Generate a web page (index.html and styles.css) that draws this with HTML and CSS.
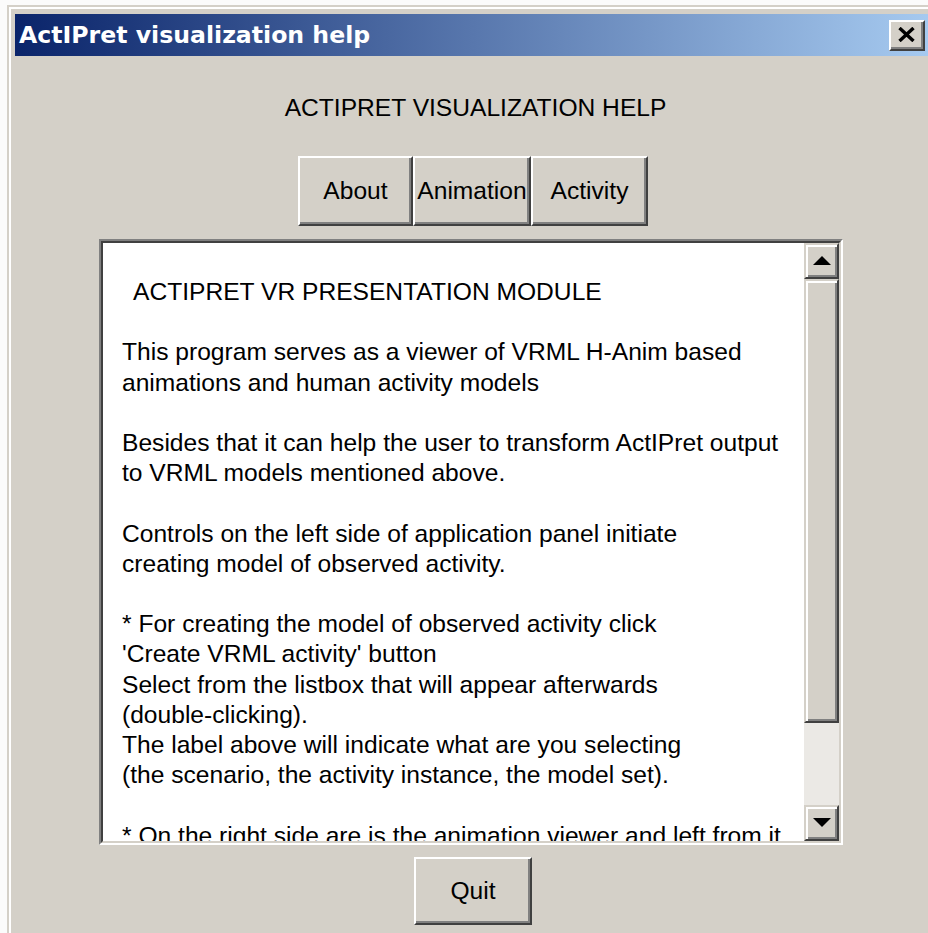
FILE: index.html
```html
<!DOCTYPE html>
<html lang="en">
<head>
<meta charset="utf-8">
<title>ActIPret visualization help</title>
<link rel="stylesheet" href="styles.css">
</head>
<body>
<div class="window">
  <div class="frame">
    <div class="titlebar">
      <span class="title">ActIPret visualization help</span>
      <button class="close" type="button" aria-label="Close">
        <svg width="17" height="15" viewBox="0 0 17 15" aria-hidden="true">
          <path d="M1.5 1 L15.5 14 M15.5 1 L1.5 14" stroke="#000" stroke-width="3.4" fill="none"/>
        </svg>
      </button>
    </div>
    <div class="client">
      <h1 class="heading">ACTIPRET VISUALIZATION HELP</h1>
      <div class="tabs">
        <button class="btn tab tab-about" type="button">About</button>
        <button class="btn tab tab-animation" type="button">Animation</button>
        <button class="btn tab tab-activity" type="button">Activity</button>
      </div>
      <div class="textbox">
        <div class="textbox-inner">
          <div class="text">
            <p class="text-title">ACTIPRET VR PRESENTATION MODULE</p>
            <p>This program serves as a viewer of VRML H-Anim based<br>animations and human activity models</p>
            <p>Besides that it can help the user to transform ActIPret output<br>to VRML models mentioned above.</p>
            <p>Controls on the left side of application panel initiate<br>creating model of observed activity.</p>
            <p>* For creating the model of observed activity click<br>'Create VRML activity' button<br>Select from the listbox that will appear afterwards<br>(double-clicking).<br>The label above will indicate what are you selecting<br>(the scenario, the activity instance, the model set).</p>
            <p>* On the right side are is the animation viewer and left from it</p>
          </div>
          <div class="scrollbar">
            <div class="sb-btn sb-up">
              <svg width="18" height="9" viewBox="0 0 18 9" aria-hidden="true"><polygon points="0,9 9,0 18,9" fill="#000"/></svg>
            </div>
            <div class="sb-thumb"></div>
            <div class="sb-track"></div>
            <div class="sb-btn sb-down">
              <svg width="18" height="9" viewBox="0 0 18 9" aria-hidden="true"><polygon points="0,0 18,0 9,9" fill="#000"/></svg>
            </div>
          </div>
        </div>
      </div>
      <button class="btn quit" type="button">Quit</button>
    </div>
  </div>
</div>
</body>
</html>
```

FILE: styles.css
```css
html, body {
  margin: 0;
  height: 100%;
  overflow: hidden;
  background: #fbfbfb;
}

body {
  font-family: "Liberation Sans", Arial, sans-serif;
  color: #000;
}

/* window frame: outer face line, white highlight, then face padding */
.window {
  margin: 5px 0 0 7px;
  width: 940px;
  border-top: 2px solid #d4d0c8;
  border-left: 2px solid #d4d0c8;
}

.frame {
  border-top: 2px solid #fff;
  border-left: 2px solid #fff;
  padding: 5px 0 0 4px;
  background: #d4d0c8;
  height: 940px;
}

.titlebar {
  width: 916px;
  height: 42px;
  box-sizing: border-box;
  padding: 0 6px 0 4px;
  display: flex;
  align-items: center;
  justify-content: space-between;
  background: linear-gradient(to right, #0a246a, #a6caf0);
}

.title {
  font-family: "DejaVu Sans", Verdana, sans-serif;
  font-weight: bold;
  font-size: 23.6px;
  color: #fff;
}

.close {
  width: 36px;
  height: 31px;
  padding: 0 2px 1px 0;
  margin: 0;
  display: flex;
  align-items: center;
  justify-content: center;
  background: #d4d0c8;
  border: 2px solid;
  border-color: #fff #404040 #404040 #fff;
  box-shadow: inset -2px -2px 0 #808080;
  box-sizing: border-box;
}

.client {
  width: 916px;
  display: flex;
  flex-direction: column;
  align-items: center;
}

.heading {
  margin: 37px 0 0 5px;
  font-weight: normal;
  font-size: 24.6px;
  line-height: 30px;
}

.tabs {
  display: flex;
  margin-top: 33px;
}

.btn {
  font-family: "Liberation Sans", Arial, sans-serif;
  font-size: 24.6px;
  color: #000;
  background: #d4d0c8;
  border: 2px solid;
  border-color: #fff #404040 #404040 #fff;
  box-shadow: inset -2px -2px 0 #808080;
  box-sizing: border-box;
  padding: 0;
  margin: 0;
}

.tab {
  height: 70px;
}

.tab-about { width: 115px; }
.tab-animation { width: 118px; }
.tab-activity { width: 117px; }

/* sunken edit box */
.textbox {
  margin: 13px 4px 0 0;
  width: 744px;
  height: 606px;
  box-sizing: border-box;
  border: 2px solid;
  border-color: #808080 #fff #fff #808080;
}

.textbox-inner {
  height: 100%;
  box-sizing: border-box;
  border: 2px solid;
  border-color: #404040 #d4d0c8 #d4d0c8 #404040;
  background: #fff;
  display: flex;
}

.text {
  flex: 1;
  overflow: hidden;
  padding: 34px 0 0 19px;
  font-size: 24.6px;
  line-height: 30.2px;
  white-space: nowrap;
}

.text p {
  margin: 0 0 30.2px;
}

.text .text-title {
  padding-left: 11px;
}

.scrollbar {
  width: 35px;
  display: flex;
  flex-direction: column;
}

.sb-btn,
.sb-thumb {
  box-sizing: border-box;
  background: #d4d0c8;
  border: 2px solid;
  border-color: #d4d0c8 #404040 #404040 #d4d0c8;
  box-shadow: inset 2px 2px 0 #fff, inset -2px -2px 0 #808080;
}

.sb-btn {
  height: 36px;
  display: flex;
  align-items: center;
  justify-content: center;
}

.sb-up svg { margin-top: -2px; }
.sb-down svg { margin-top: -1px; }

.sb-thumb {
  height: 444px;
}

.sb-track {
  flex: 1;
  background: #ebe9e5;
}

.quit {
  margin-top: 12px;
  width: 118px;
  height: 68px;
}
```
